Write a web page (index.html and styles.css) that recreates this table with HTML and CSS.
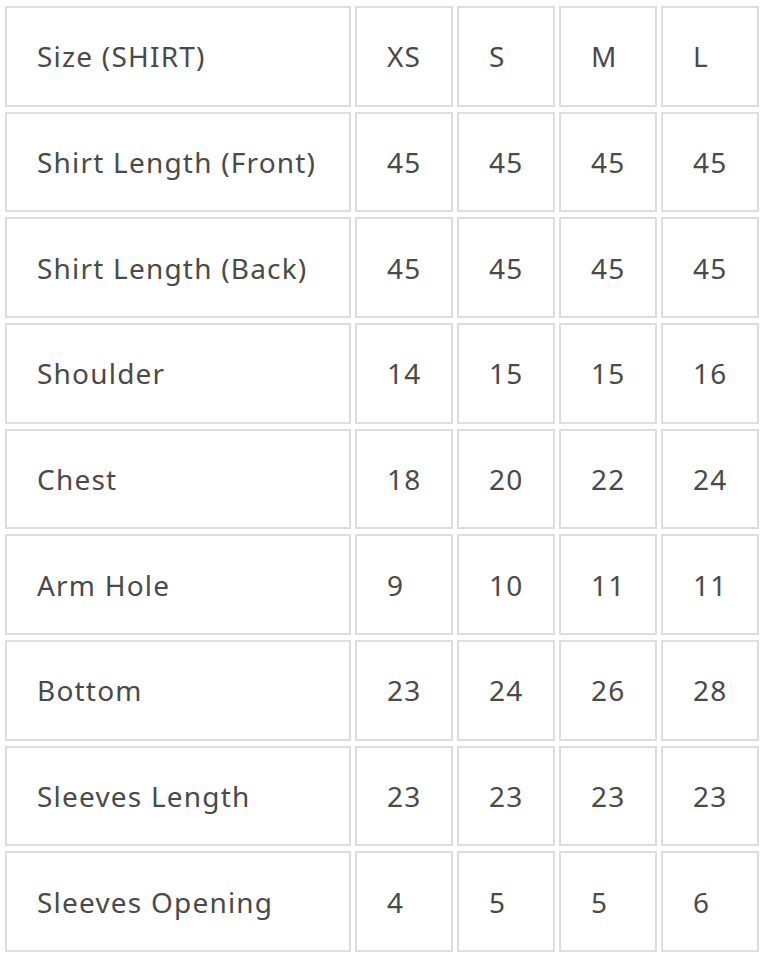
FILE: index.html
```html
<!DOCTYPE html>
<html lang="en">
<head>
<meta charset="utf-8">
<title>Size Chart</title>
<link rel="stylesheet" href="styles.css">
</head>
<body>
<table class="size-table">
  <colgroup>
    <col class="col-label">
    <col class="col-size">
    <col class="col-size">
    <col class="col-size">
    <col class="col-size">
  </colgroup>
  <tbody>
    <tr><td>Size (SHIRT)</td><td>XS</td><td>S</td><td>M</td><td>L</td></tr>
    <tr><td>Shirt Length (Front)</td><td>45</td><td>45</td><td>45</td><td>45</td></tr>
    <tr><td>Shirt Length (Back)</td><td>45</td><td>45</td><td>45</td><td>45</td></tr>
    <tr><td>Shoulder</td><td>14</td><td>15</td><td>15</td><td>16</td></tr>
    <tr><td>Chest</td><td>18</td><td>20</td><td>22</td><td>24</td></tr>
    <tr><td>Arm Hole</td><td>9</td><td>10</td><td>11</td><td>11</td></tr>
    <tr><td>Bottom</td><td>23</td><td>24</td><td>26</td><td>28</td></tr>
    <tr><td>Sleeves Length</td><td>23</td><td>23</td><td>23</td><td>23</td></tr>
    <tr><td>Sleeves Opening</td><td>4</td><td>5</td><td>5</td><td>6</td></tr>
  </tbody>
</table>
</body>
</html>
```
FILE: styles.css
```css
html, body {
  margin: 0;
  padding: 0;
  background: #ffffff;
}

body {
  padding: 1px 0 0 1px;
}

.size-table {
  border-collapse: separate;
  border-spacing: 4px 5px;
  table-layout: fixed;
  width: 762px;
  font-family: "Noto Sans", "Open Sans", sans-serif;
  font-size: 28px;
  letter-spacing: 1.2px;
  color: #4a4a4a;
}

.col-label {
  width: 346px;
}

.col-size {
  width: 98px;
}

.size-table td {
  box-sizing: border-box;
  height: 100.67px;
  border: 2px solid #dddddd;
  padding: 0 0 0 30px;
  vertical-align: middle;
  text-align: left;
  white-space: nowrap;
}
```
